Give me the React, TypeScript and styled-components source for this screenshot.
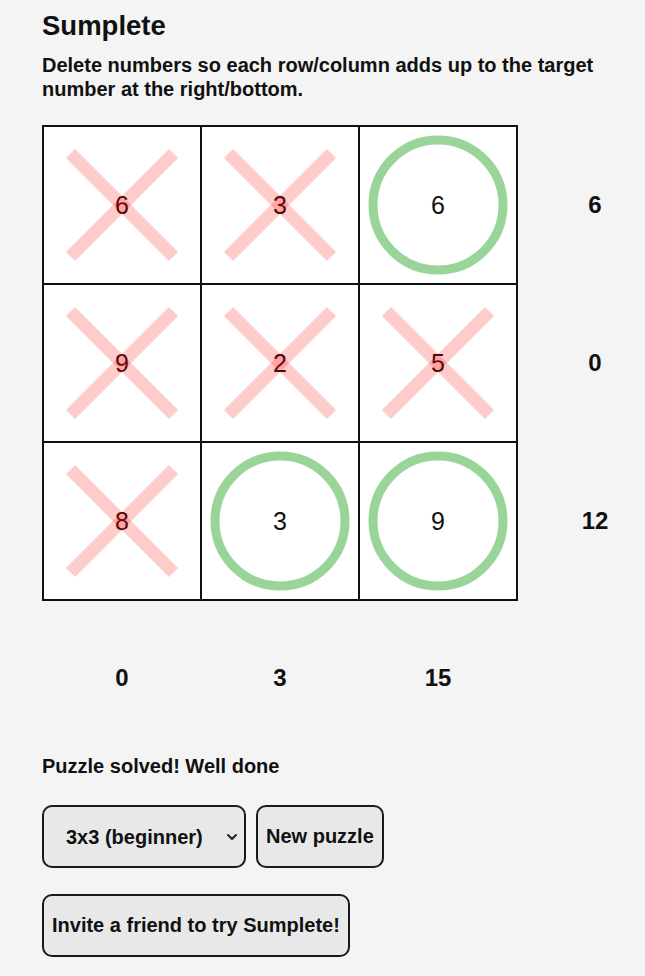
import React from 'react';
import styled, { createGlobalStyle } from 'styled-components';
import { ChevronDown } from 'lucide-react';

/* ─── Data ───────────────────────────────────────────────────────── */
type Mark = 'keep' | 'delete';

const GRID: { value: number; mark: Mark }[][] = [
  [{ value: 6, mark: 'delete' }, { value: 3, mark: 'delete' }, { value: 6, mark: 'keep' }],
  [{ value: 9, mark: 'delete' }, { value: 2, mark: 'delete' }, { value: 5, mark: 'delete' }],
  [{ value: 8, mark: 'delete' }, { value: 3, mark: 'keep' }, { value: 9, mark: 'keep' }],
];
const ROW_TARGETS = [6, 0, 12];
const COL_TARGETS = [0, 3, 15];

/* ─── Styled ─────────────────────────────────────────────────────── */
const Global = createGlobalStyle`
  html, body {
    margin: 0;
    background: #f4f4f4;
  }
  body {
    font-family: "Liberation Sans", Arial, sans-serif;
    color: #111;
  }
`;

const Page = styled.div`
  padding: 10px 0 20px 42px;
`;

const Title = styled.h1`
  font-size: 27.5px;
  line-height: 32px;
  font-weight: 700;
  margin: 0 0 11px 0;
`;

const Intro = styled.p`
  font-size: 20px;
  line-height: 24px;
  font-weight: 700;
  margin: 0 0 24px 0;
  max-width: 580px;
`;

const BoardRow = styled.div`
  display: flex;
  align-items: flex-start;
`;

const Grid = styled.div`
  display: grid;
  grid-template-columns: repeat(3, 156px);
  grid-auto-rows: 156px;
  gap: 2px;
  padding: 2px;
  background: #111;
`;

const Cell = styled.div`
  position: relative;
  background: #fff;
  display: flex;
  align-items: center;
  justify-content: center;
  font-size: 25px;
  color: #111;
`;

const MarkSvg = styled.svg`
  position: absolute;
  inset: 0;
  width: 100%;
  height: 100%;
  pointer-events: none;
`;

const SideTargets = styled.div`
  display: flex;
  flex-direction: column;
  gap: 2px;
  padding: 2px 0;
`;

const BottomTargets = styled.div`
  display: flex;
  gap: 2px;
  padding: 0 2px;
`;

const Target = styled.div<{ $w: number; $h: number }>`
  width: ${({ $w }) => $w}px;
  height: ${({ $h }) => $h}px;
  display: flex;
  align-items: center;
  justify-content: center;
  font-size: 24px;
  font-weight: 700;
`;

const Status = styled.div`
  font-size: 20px;
  line-height: 23px;
  font-weight: 700;
`;

const Controls = styled.div`
  display: flex;
  gap: 10px;
  margin-top: 27px;
`;

const SelectWrap = styled.div`
  position: relative;
  width: 204px;
`;

const Select = styled.select`
  appearance: none;
  width: 100%;
  height: 63px;
  padding: 0 40px 0 22px;
  font-family: inherit;
  font-size: 20px;
  font-weight: 700;
  color: #111;
  background: #e8e8e8;
  border: 2px solid #1a1a1a;
  border-radius: 10px;
`;

const Chevron = styled(ChevronDown)`
  position: absolute;
  right: 6px;
  top: 50%;
  transform: translateY(-50%);
  pointer-events: none;
`;

const Button = styled.button`
  height: 63px;
  padding: 0 8px;
  font-family: inherit;
  font-size: 20px;
  font-weight: 700;
  color: #111;
  background: #e8e8e8;
  border: 2px solid #1a1a1a;
  border-radius: 10px;
  cursor: pointer;
`;

const InviteRow = styled.div`
  margin-top: 26px;
`;

/* ─── Component ──────────────────────────────────────────────────── */
const CellMark: React.FC<{ mark: Mark }> = ({ mark }) =>
  mark === 'delete' ? (
    <MarkSvg viewBox="0 0 156 156">
      <g stroke="rgba(255,0,0,0.2)" strokeWidth={13}>
        <line x1={26.5} y1={26.5} x2={129.5} y2={129.5} />
        <line x1={129.5} y1={26.5} x2={26.5} y2={129.5} />
      </g>
    </MarkSvg>
  ) : (
    <MarkSvg viewBox="0 0 156 156">
      <circle cx={78} cy={78} r={65} fill="none" stroke="rgba(0,150,0,0.4)" strokeWidth={9} />
    </MarkSvg>
  );

export default function App() {
  return (
    <Page>
      <Global />
      <Title>Sumplete</Title>
      <Intro>Delete numbers so each row/column adds up to the target number at the right/bottom.</Intro>

      <BoardRow>
        <Grid>
          {GRID.flat().map((c, i) => (
            <Cell key={i}>
              {c.value}
              <CellMark mark={c.mark} />
            </Cell>
          ))}
        </Grid>
        <SideTargets>
          {ROW_TARGETS.map((t, i) => (
            <Target key={i} $w={154} $h={156}>{t}</Target>
          ))}
        </SideTargets>
      </BoardRow>
      <BottomTargets>
        {COL_TARGETS.map((t, i) => (
          <Target key={i} $w={156} $h={154}>{t}</Target>
        ))}
      </BottomTargets>

      <Status>Puzzle solved! Well done</Status>

      <Controls>
        <SelectWrap>
          <Select defaultValue="3">
            <option value="3">3x3 (beginner)</option>
            <option value="4">4x4 (easy)</option>
            <option value="5">5x5 (medium)</option>
          </Select>
          <Chevron size={16} strokeWidth={3} color="#222" />
        </SelectWrap>
        <Button>New puzzle</Button>
      </Controls>

      <InviteRow>
        <Button>Invite a friend to try Sumplete!</Button>
      </InviteRow>
    </Page>
  );
}
